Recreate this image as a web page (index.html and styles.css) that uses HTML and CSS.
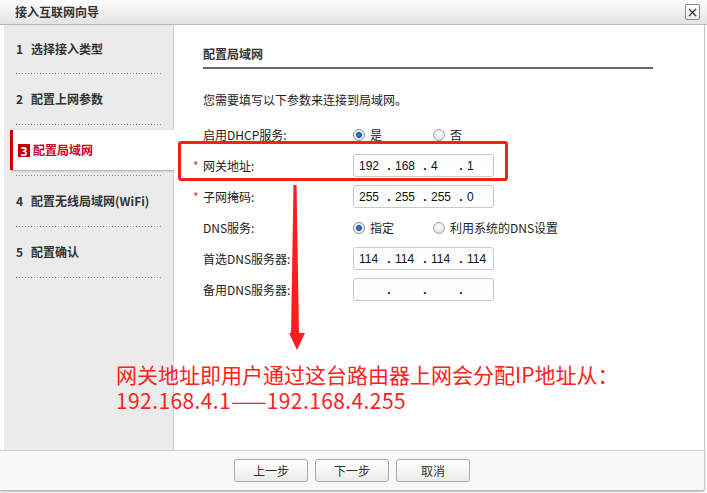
FILE: index.html
```html
<!DOCTYPE html>
<html>
<head>
<meta charset="utf-8">
<link rel="stylesheet" href="styles.css">
</head>
<body>
<div class="dialog">
  <div class="titlebar">
    <span class="title">接入互联网向导</span>
    <span class="close"><svg width="9" height="9" viewBox="0 0 9 9"><path d="M1 1L8 8M8 1L1 8" stroke="#333" stroke-width="1.2" fill="none"/></svg></span>
  </div>
  <div class="body">
    <div class="sidebar">
      <div class="step first"><span class="num">1</span>选择接入类型</div>
      <div class="step"><span class="num">2</span>配置上网参数</div>
      <div class="step active"><div class="active-box"><span class="badge">3</span>配置局域网</div></div>
      <div class="step"><span class="num">4</span>配置无线局域网(WiFi)</div>
      <div class="step"><span class="num">5</span>配置确认</div>
    </div>
    <div class="main">
      <div class="heading">配置局域网</div>
      <div class="intro">您需要填写以下参数来连接到局域网。</div>
      <div class="form">
        <div class="row">
          <div class="label">启用DHCP服务:</div>
          <div class="opt"><span class="radio on"></span>是</div>
          <div class="opt"><span class="radio"></span>否</div>
        </div>
        <div class="row">
          <div class="label"><span class="req">*</span>网关地址:</div>
          <div class="ip"><span class="seg">192</span><span class="dot">.</span><span class="seg">168</span><span class="dot">.</span><span class="seg">4</span><span class="dot">.</span><span class="seg">1</span></div>
        </div>
        <div class="row">
          <div class="label"><span class="req">*</span>子网掩码:</div>
          <div class="ip"><span class="seg">255</span><span class="dot">.</span><span class="seg">255</span><span class="dot">.</span><span class="seg">255</span><span class="dot">.</span><span class="seg">0</span></div>
        </div>
        <div class="row">
          <div class="label">DNS服务:</div>
          <div class="opt"><span class="radio on"></span>指定</div>
          <div class="opt wide"><span class="radio"></span>利用系统的DNS设置</div>
        </div>
        <div class="row">
          <div class="label">首选DNS服务器:</div>
          <div class="ip"><span class="seg">114</span><span class="dot">.</span><span class="seg">114</span><span class="dot">.</span><span class="seg">114</span><span class="dot">.</span><span class="seg">114</span></div>
        </div>
        <div class="row">
          <div class="label">备用DNS服务器:</div>
          <div class="ip"><span class="seg"></span><span class="dot">.</span><span class="seg"></span><span class="dot">.</span><span class="seg"></span><span class="dot">.</span><span class="seg"></span></div>
        </div>
      </div>
    </div>
  </div>
  <div class="footer">
    <span class="btn">上一步</span>
    <span class="btn">下一步</span>
    <span class="btn">取消</span>
  </div>
  <div class="highlight"></div>
  <svg class="arrow" width="20" height="170" viewBox="0 0 20 170">
    <polygon points="4.5,0 7.5,0 10,150 2,150" fill="#ff1e1e"/>
    <polygon points="0,148 16,148 8,165" fill="#ff1e1e"/>
  </svg>
  <div class="note"><div>网关地址即用户通过这台路由器上网会分配IP地址从：</div><div class="range">192.168.4.1——192.168.4.255</div></div>
</div>
</body>
</html>
```

FILE: styles.css
```css
html, body {
  margin: 0;
  padding: 0;
  background: #fff;
}

body {
  font-family: "Noto Sans CJK SC", "Noto Sans", sans-serif;
  font-size: 12px;
  color: #333;
}

.dialog {
  position: relative;
  width: 707px;
  height: 493px;
}

.titlebar {
  height: 24px;
  border-bottom: 1px solid #b8b8b8;
  background: linear-gradient(#fcfcfc, #e3e3e3);
  display: flex;
  align-items: center;
  justify-content: space-between;
  padding: 0 7px 0 15px;
}

.title {
  font-weight: bold;
  color: #333;
  line-height: 16px;
}

.close {
  width: 13px;
  height: 14px;
  border: 1px solid #8a8a8a;
  border-radius: 2px;
  background: linear-gradient(#fff, #ececec);
  display: flex;
  align-items: center;
  justify-content: center;
}

.body {
  display: flex;
  height: 425px;
  width: 704px;
  border-right: 1px solid #c8c8c8;
}

.sidebar {
  margin-left: 4px;
  width: 169px;
  background: #ebebeb;
  border-right: 1px solid #d2d2d2;
}

.step {
  height: 50px;
  margin: 0 11px 0 12px;
  display: flex;
  align-items: center;
  font-weight: bold;
  color: #333;
  line-height: 16px;
  background: linear-gradient(to right, #8c8c8c 34%, transparent 34%) left bottom / 3px 1px repeat-x;
  padding-bottom: 1px;
}

.step.first {
  height: 48px;
}

.num {
  width: 15px;
}

.active-box {
  flex: 1;
  height: 40px;
  margin: 0 -13px 0 -6px;
  background: #fff;
  border-left: 3px solid #d40000;
  box-shadow: 1px 1px 2px rgba(0, 0, 0, 0.3);
  display: flex;
  align-items: center;
  padding-left: 5px;
  color: #d00020;
}

.badge {
  width: 12px;
  height: 13px;
  background: #c00000;
  color: #fff;
  font-size: 12px;
  line-height: 13px;
  text-align: center;
  margin-right: 3px;
}

.main {
  flex: 1;
  background: #fff;
  padding: 20px 51px 0 29px;
}

.heading {
  font-weight: bold;
  color: #333;
  line-height: 18px;
  padding-bottom: 4px;
  border-bottom: 2px solid #686868;
}

.intro {
  margin-top: 22px;
  line-height: 18px;
  color: #222;
}

.form {
  margin-top: 10px;
}

.row {
  height: 31px;
  display: flex;
  align-items: center;
  color: #222;
  line-height: 16px;
}

.label {
  width: 150px;
  display: flex;
}

.req {
  width: 10px;
  margin-left: -10px;
  color: #e8343c;
}

.opt {
  width: 80px;
  display: flex;
  align-items: center;
}

.opt.wide {
  width: auto;
}

.radio {
  width: 12px;
  height: 12px;
  box-sizing: border-box;
  border: 1px solid #a4a4a4;
  border-radius: 50%;
  background: radial-gradient(circle at 45% 40%, #fdfdfd 0, #e4e4e4 70%, #d0d0d0 100%);
  margin-right: 5px;
}

.radio.on {
  border-color: #8c8c8c;
  background: radial-gradient(circle, #3d86d6 0, #1656a8 2.6px, #e6e6e6 3.3px, #fafafa 5px);
}

.ip {
  width: 141px;
  height: 23px;
  box-sizing: border-box;
  border: 1px solid #c9c9c9;
  border-radius: 3px;
  background: linear-gradient(#fbfbfb, #fff);
  display: flex;
  align-items: center;
  padding-left: 5px;
  font-family: "Liberation Sans", Arial, sans-serif;
  font-size: 12px;
  color: #111;
}

.seg {
  width: 24px;
}

.dot {
  width: 12px;
  text-align: center;
  font-weight: bold;
}

.footer {
  height: 31px;
  width: 470px;
  padding: 8px 0 0 234px;
  border-top: 1px solid #cfcfcf;
  border-right: 1px solid #c8c8c8;
  border-bottom: 1px solid #b8b8b8;
  border-radius: 0 0 3px 0;
  background: #f8f8f8;
  box-shadow: 0 1px 2px rgba(0, 0, 0, 0.25);
  display: flex;
  align-items: flex-start;
  gap: 7px;
}

.btn {
  width: 74px;
  height: 23px;
  box-sizing: border-box;
  border: 1px solid #a9a9a9;
  border-radius: 3px;
  background: linear-gradient(#ffffff, #ebebeb);
  display: flex;
  align-items: center;
  justify-content: center;
  color: #333;
  line-height: 16px;
}

.highlight {
  position: absolute;
  left: 178px;
  top: 141px;
  width: 324px;
  height: 34px;
  border: 3px solid #f4201a;
  border-radius: 3px;
}

.arrow {
  position: absolute;
  left: 289px;
  top: 185px;
}

.note {
  position: absolute;
  left: 116px;
  top: 361px;
  font-size: 21px;
  color: #ff2020;
  white-space: nowrap;
}

.note div {
  height: 26px;
  line-height: 26px;
}

.range {
  letter-spacing: 0.4px;
}
```
